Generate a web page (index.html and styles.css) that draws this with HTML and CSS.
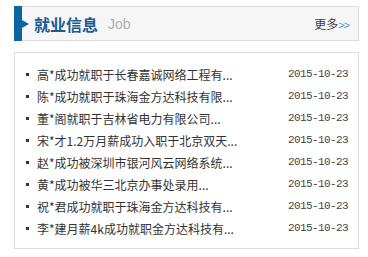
FILE: index.html
```html
<!DOCTYPE html>
<html lang="zh-CN">
<head>
    <meta charset="UTF-8">
    <title>就业信息</title>
    <link rel="stylesheet" href="styles.css">
</head>
<body>
    <div class="job-panel">
        <!-- header -->
        <div class="panel-head">
            <span class="head-mark"></span>
            <h3 class="head-title">就业信息</h3>
            <span class="head-sub">Job</span>
            <a class="head-more" href="#">更多<span class="more-arrow">&gt;&gt;</span></a>
        </div>

        <!-- list -->
        <ul class="job-list">
            <li><a href="#">高*成功就职于长春嘉诚网络工程有...</a><span class="date">2015-10-23</span></li>
            <li><a href="#">陈*成功就职于珠海金方达科技有限...</a><span class="date">2015-10-23</span></li>
            <li><a href="#">董*阁就职于吉林省电力有限公司...</a><span class="date">2015-10-23</span></li>
            <li><a href="#">宋*才1.2万月薪成功入职于北京双天...</a><span class="date">2015-10-23</span></li>
            <li><a href="#">赵*成功被深圳市银河风云网络系统...</a><span class="date">2015-10-23</span></li>
            <li><a href="#">黄*成功被华三北京办事处录用...</a><span class="date">2015-10-23</span></li>
            <li><a href="#">祝*君成功就职于珠海金方达科技有...</a><span class="date">2015-10-23</span></li>
            <li><a href="#">李*建月薪4k成功就职金方达科技有...</a><span class="date">2015-10-23</span></li>
        </ul>
    </div>
</body>
</html>
```

FILE: styles.css
```css
body {
    margin: 0;
    background-color: #fff;
    font-family: "Noto Sans CJK SC", "Liberation Sans", sans-serif;
    font-size: 12px;
    color: #333;
}

a {
    color: #333;
    text-decoration: none;
}

.job-panel {
    width: 345px;
    padding: 6px 0 0 14px;
}

/* Header */
.panel-head {
    display: flex;
    align-items: center;
    height: 33px;
    border: 1px solid #dcdcdc;
    background-color: #f6f6f6;
}

.head-mark {
    position: relative;
    align-self: stretch;
    width: 8px;
    margin: -1px 0 -1px -1px;
    background-color: #0b65a0;
}

.head-mark::after {
    content: "";
    position: absolute;
    left: 8px;
    top: 14px;
    border-left: 7px solid #0b65a0;
    border-top: 4px solid transparent;
    border-bottom: 4px solid transparent;
}

.head-title {
    margin: 0 0 0 12px;
    font-size: 16px;
    font-weight: bold;
    color: #1a5c94;
}

.head-sub {
    margin-left: 10px;
    font-family: "Liberation Sans", sans-serif;
    font-size: 14px;
    color: #b0b0b0;
}

.head-more {
    margin-left: auto;
    margin-right: 9px;
    font-size: 12px;
    color: #444;
}

.more-arrow {
    font-family: "Liberation Sans", sans-serif;
    font-size: 11px;
    letter-spacing: -1px;
    color: #4a9be0;
}

/* List */
.job-list {
    list-style: none;
    margin: 11px 0 0;
    padding: 10px 10px 9px 10px;
    border: 1px solid #dcdcdc;
}

.job-list li {
    display: flex;
    align-items: center;
    height: 22px;
}

.job-list li::before {
    content: "";
    width: 3px;
    height: 3px;
    margin: 0 8px 0 1px;
    background-color: #333;
}

.job-list .date {
    margin-left: auto;
    font-family: "Liberation Mono", monospace;
    font-size: 11px;
    letter-spacing: -0.6px;
    color: #444;
}
```
